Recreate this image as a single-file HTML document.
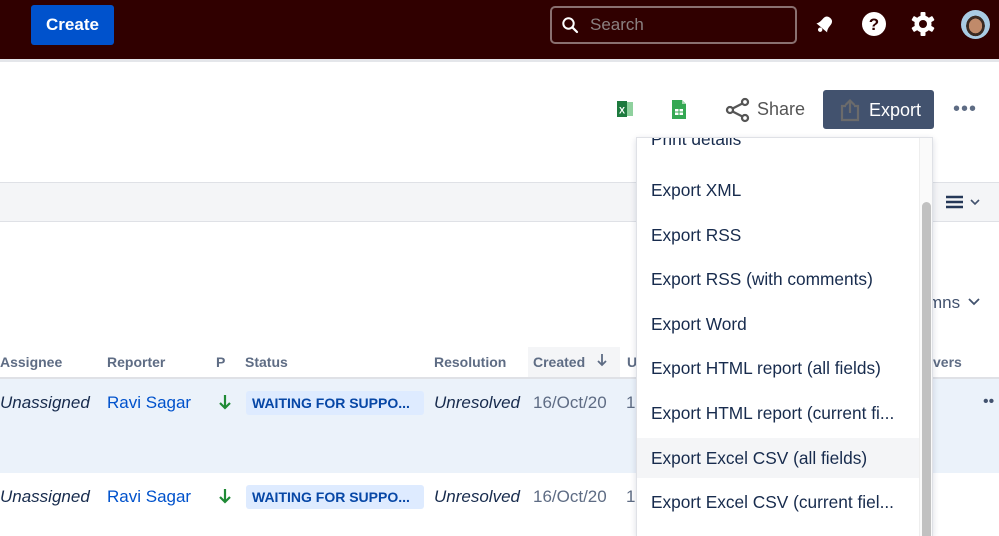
<!DOCTYPE html>
<html style="width:999px;height:536px;overflow:hidden"><head><meta charset="utf-8"><style>
*{box-sizing:border-box;margin:0;padding:0}
body{width:999px;height:536px;overflow:hidden;background:#fff;font-family:"Liberation Sans",Arial,sans-serif;position:relative;color:#172b4d}
.a{position:absolute;white-space:nowrap}
.hdr{left:0;top:0;width:999px;height:59px;background:#300000}
.create{left:31px;top:5px;width:83px;height:40px;background:#0052cc;border-radius:3px;color:#fff;font-size:17px;font-weight:bold;text-align:center;line-height:40px}
.search{left:550px;top:6px;width:247px;height:38px;border:2px solid #8a7070;border-radius:5px;color:#8a8080;font-size:17px;line-height:34px;padding-left:38px}
.th{top:354px;font-size:14px;font-weight:bold;color:#5e6c84}
.it{font-style:italic;font-size:17px;color:#172b4d}
.lnk{font-size:17px;color:#0052cc}
.lz{background:#deebff;color:#0747a6;font-weight:bold;font-size:14px;border-radius:3px;height:24px;line-height:24px;padding:0 6px;width:178px}
.dt{font-size:17px;color:#5e6c84}
.menu{left:636px;top:137px;width:297px;height:399px;background:#fff;border:1px solid #dfe1e6;border-bottom:none;box-shadow:0 2px 6px rgba(9,30,66,.15);overflow:hidden}
.mi{position:absolute;left:0;width:282px;height:40px;line-height:40px;padding-left:14px;font-size:17.3px;color:#172b4d;white-space:nowrap}
</style></head><body>
<div class="a hdr"></div>
<div class="a create">Create</div>
<div class="a search">Search</div>
<svg class="a" style="left:561px;top:16px" width="18" height="18" viewBox="0 0 18 18"><circle cx="7.5" cy="7.5" r="5.2" fill="none" stroke="#fff" stroke-width="2"/><path d="M11.3 11.3L16 16" stroke="#fff" stroke-width="2.2" stroke-linecap="round"/></svg>
<svg class="a" style="left:812px;top:11px" width="26" height="26" viewBox="0 0 26 26"><g transform="rotate(40 13 13)"><path d="M6 18 Q8 16 8 11 Q8 5 13 5 Q18 5 18 11 Q18 16 20 18 Z" fill="#fff"/><circle cx="13" cy="20.5" r="2.2" fill="#fff"/></g></svg>
<svg class="a" style="left:861px;top:11px" width="26" height="26" viewBox="0 0 26 26"><circle cx="13" cy="13" r="12" fill="#fff"/><text x="13" y="19" font-size="17" font-weight="bold" text-anchor="middle" fill="#300000" font-family="Liberation Sans">?</text></svg>
<svg class="a" style="left:910px;top:11px" width="26" height="26" viewBox="0 0 26 26"><g fill="#fff"><circle cx="13" cy="13" r="8.5"/><rect x="10.5" y="1" width="5" height="24" rx="1"/><rect x="10.5" y="1" width="5" height="24" rx="1" transform="rotate(60 13 13)"/><rect x="10.5" y="1" width="5" height="24" rx="1" transform="rotate(120 13 13)"/></g><circle cx="13" cy="13" r="4" fill="#300000"/></svg>
<div class="a" style="left:961px;top:10px;width:29px;height:29px;border-radius:50%;background:radial-gradient(ellipse at 50% 55%,#c08a6a 0 32%,#3a2a22 33% 45%,#a9cbe3 46%)"></div>
<div class="a" style="left:0;top:59px;width:999px;height:3px;background:#e4e6ea"></div>

<!-- toolbar -->
<svg class="a" style="left:616px;top:99px" width="18" height="20" viewBox="0 0 18 20"><rect x="6" y="3" width="11" height="14" fill="#8fd19e"/><rect x="1" y="2" width="10" height="16" fill="#1d7a3e"/><text x="6" y="14.5" font-size="9" font-weight="bold" fill="#fff" text-anchor="middle" font-family="Liberation Sans">X</text></svg>
<svg class="a" style="left:671px;top:99px" width="16" height="21" viewBox="0 0 16 21"><path d="M1 1H11L15 5V20H1Z" fill="#34a853"/><path d="M11 1V5H15" fill="#a8d8b3"/><rect x="4" y="10" width="8" height="6" fill="#fff"/><path d="M4 13H12M8 10V16" stroke="#34a853" stroke-width="1"/></svg>
<svg class="a" style="left:725px;top:97px" width="26" height="26" viewBox="0 0 26 26"><g stroke="#555" stroke-width="2.3" fill="none"><circle cx="20" cy="5" r="3"/><circle cx="5" cy="13" r="3"/><circle cx="20" cy="21" r="3"/><path d="M7.6 11.5L17.4 6.5M7.6 14.5L17.4 19.5"/></g></svg>
<div class="a" style="left:757px;top:99px;font-size:18px;color:#555">Share</div>
<div class="a" style="left:823px;top:90px;width:111px;height:39px;background:#42526e;border-radius:3px"></div>
<svg class="a" style="left:839px;top:98px" width="22" height="24" viewBox="0 0 22 24"><path d="M7 8H3V22H19V8H15" fill="none" stroke="#6b6b6b" stroke-width="2.2"/><path d="M11 15V3M6.5 7L11 2.5L15.5 7" fill="none" stroke="#6b6b6b" stroke-width="2.2"/></svg>
<div class="a" style="left:869px;top:100px;font-size:18px;color:#fff">Export</div>
<div class="a" style="left:953px;top:98px;font-size:20px;color:#5e6c84;letter-spacing:1px">&#8226;&#8226;&#8226;</div>

<!-- gray band -->
<div class="a" style="left:0;top:182px;width:999px;height:40px;background:#f4f5f7;border-top:1px solid #dfe1e6;border-bottom:1px solid #dfe1e6"></div>
<svg class="a" style="left:945px;top:194px" width="40" height="16" viewBox="0 0 40 16"><path d="M1 3H18M1 8H18M1 13H18" stroke="#253858" stroke-width="2.6"/><path d="M26 6L30 10L34 6" stroke="#42526e" stroke-width="1.6" fill="none"/></svg>
<div class="a" style="left:928px;top:293px;font-size:17px;color:#42526e">mns</div>
<svg class="a" style="left:967px;top:297px" width="14" height="10" viewBox="0 0 14 10"><path d="M2 2L7 7L12 2" stroke="#42526e" stroke-width="1.8" fill="none"/></svg>

<!-- table -->
<div class="a" style="left:528px;top:347px;width:92px;height:31px;background:#f4f5f7"></div>
<div class="a th" style="left:0">Assignee</div>
<div class="a th" style="left:107px">Reporter</div>
<div class="a th" style="left:216px">P</div>
<div class="a th" style="left:245px">Status</div>
<div class="a th" style="left:434px">Resolution</div>
<div class="a th" style="left:533px">Created</div>
<svg class="a" style="left:596px;top:353px" width="12" height="14" viewBox="0 0 12 14"><path d="M6 1V12M2 8L6 12L10 8" stroke="#5e6c84" stroke-width="1.8" fill="none"/></svg>
<div class="a th" style="left:627px">U</div>
<div class="a th" style="left:933px">vers</div>
<div class="a" style="left:0;top:377px;width:999px;height:2px;background:#dfe1e6"></div>
<div class="a" style="left:0;top:379px;width:999px;height:94px;background:#ebf2fa"></div>

<div class="a it" style="left:0;top:393px">Unassigned</div>
<div class="a lnk" style="left:107px;top:393px">Ravi Sagar</div>
<svg class="a" style="left:218px;top:393px" width="14" height="18" viewBox="0 0 14 18"><path d="M7 2V15M2 10L7 15L12 10" stroke="#1f8a35" stroke-width="2.2" fill="none"/></svg>
<div class="a lz" style="left:246px;top:391px">WAITING FOR SUPPO...</div>
<div class="a it" style="left:434px;top:393px">Unresolved</div>
<div class="a dt" style="left:533px;top:393px">16/Oct/20</div>
<div class="a dt" style="left:626px;top:393px">16</div>
<div class="a" style="left:983px;top:393px;font-size:16px;color:#42526e">&#8226;&#8226;</div>

<div class="a it" style="left:0;top:487px">Unassigned</div>
<div class="a lnk" style="left:107px;top:487px">Ravi Sagar</div>
<svg class="a" style="left:218px;top:487px" width="14" height="18" viewBox="0 0 14 18"><path d="M7 2V15M2 10L7 15L12 10" stroke="#1f8a35" stroke-width="2.2" fill="none"/></svg>
<div class="a lz" style="left:246px;top:485px">WAITING FOR SUPPO...</div>
<div class="a it" style="left:434px;top:487px">Unresolved</div>
<div class="a dt" style="left:533px;top:487px">16/Oct/20</div>
<div class="a dt" style="left:626px;top:487px">16</div>

<!-- menu -->
<div class="a menu">
  <div class="mi" style="top:-19px">Print details</div>
  <div class="mi" style="top:32px">Export XML</div>
  <div class="mi" style="top:77px">Export RSS</div>
  <div class="mi" style="top:121px">Export RSS (with comments)</div>
  <div class="mi" style="top:166px">Export Word</div>
  <div class="mi" style="top:210px">Export HTML report (all fields)</div>
  <div class="mi" style="top:255px">Export HTML report (current fi...</div>
  <div class="mi" style="top:300px;background:#f4f5f7">Export Excel CSV (all fields)</div>
  <div class="mi" style="top:344px">Export Excel CSV (current fiel...</div>
  <div class="a" style="left:282px;top:0;width:14px;height:420px;background:#fafafa;border-left:1px solid #eee"></div>
  <div class="a" style="left:285px;top:64px;width:9px;height:360px;background:#c1c1c1;border-radius:5px"></div>
</div>
</body></html>
